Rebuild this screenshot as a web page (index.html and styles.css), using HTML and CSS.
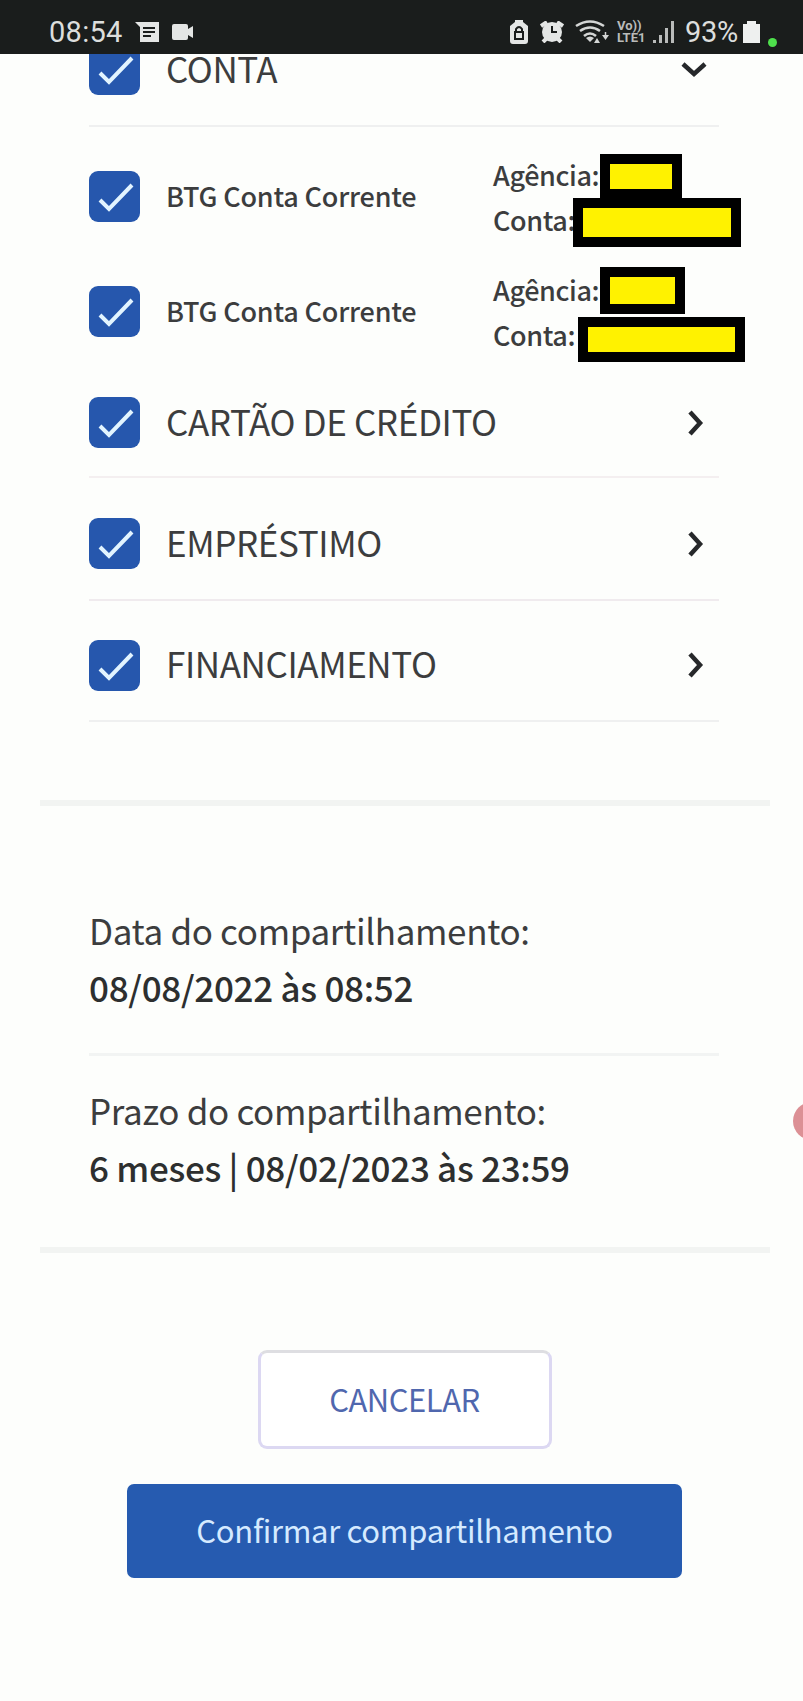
FILE: index.html
```
<!doctype html>
<html lang="pt-BR">
<head>
    <meta charset="UTF-8">
    <title>Compartilhamento</title>
    <link rel="stylesheet" href="styles.css">
</head>
<body>
<svg width="0" height="0" class="defs">
    <symbol id="check" viewBox="0 0 51 51"><path d="M11 29 L20 38 L43 14"/></symbol>
    <symbol id="arrow" viewBox="0 0 16 26"><path d="M2 2 L12 13 L2 24"/></symbol>
</svg>
<div class="status">
    <div class="status-left">
        <span class="clock">08:54</span>
        <svg class="msg" width="24" height="20" viewBox="0 0 24 20">
            <path fill="#e4e6e5" d="M0 0H24V20H5V5Z"/>
            <path stroke="#1a1d1c" stroke-width="2" d="M8 6H20M8 10H20M8 14H16"/>
        </svg>
        <svg class="cam" width="22" height="16" viewBox="0 0 22 16">
            <path fill="#e4e6e5" d="M2 0H14Q16 0 16 2V5L21 2V14L16 11V14Q16 16 14 16H2Q0 16 0 14V2Q0 0 2 0Z"/>
        </svg>
    </div>
    <div class="status-right">
        <svg width="18" height="24" viewBox="0 0 18 24">
            <path fill="#e4e6e5" d="M5 0H13V2L18 6V21Q18 24 15 24H3Q0 24 0 21V6L5 2Z"/>
            <path fill="none" stroke="#1a1d1c" stroke-width="2" d="M5 12H13V19H5ZM6 12V9Q9 5 12 9V12"/>
        </svg>
        <svg class="alarm" width="24" height="22" viewBox="0 0 24 22">
            <path stroke="#e4e6e5" stroke-width="4" d="M1 5L7 1M23 5L17 1M3 21L7 17M21 21L17 17"/>
            <circle cx="12" cy="11" r="10" fill="#e4e6e5"/>
            <path fill="none" stroke="#1a1d1c" stroke-width="2" d="M12 5V11H17"/>
        </svg>
        <svg class="wifi" width="34" height="25" viewBox="0 0 34 25">
            <path fill="none" stroke="#d4d6d5" stroke-width="2.6" d="M1 6Q15 -3 29 6M5 11Q15 4 25 11M9 16Q15 11 21 16"/>
            <path fill="#d4d6d5" d="M11 18Q15 15 19 18L15 22ZM19 23L22 18L25 23ZM27 15H34L30.500 20Z"/>
            <path stroke="#d4d6d5" stroke-width="1.500" d="M30.500 12V16"/>
        </svg>
        <span class="volte">Vo))<br>LTE1</span>
        <svg class="bars" width="21" height="22" viewBox="0 0 21 22">
            <path stroke="#b9bbba" stroke-width="3" d="M1.500 19V22M7.500 14V22M13.500 7V22M19.500 0V22"/>
        </svg>
        <span class="percent">93%</span>
        <svg class="battery" width="17" height="22" viewBox="0 0 17 22">
            <path fill="#eef0ef" d="M4 0H13V3H17V22H0V3H4Z"/>
        </svg>
        <span class="dot"></span>
    </div>
</div>

<div class="page">
    <div class="list">
        <div class="row conta">
            <svg class="box"><use href="#check"/></svg>
            <span class="label">CONTA</span>
            <svg class="arrow down"><use href="#arrow"/></svg>
        </div>
        <div class="account">
            <svg class="box"><use href="#check"/></svg>
            <span class="name">BTG Conta Corrente</span>
            <div class="data">
                <div>Agência:</div>
                <div>Conta:</div>
                <span class="mask mask-a1"></span>
                <span class="mask mask-c1"></span>
            </div>
        </div>
        <div class="account">
            <svg class="box"><use href="#check"/></svg>
            <span class="name">BTG Conta Corrente</span>
            <div class="data">
                <div>Agência:</div>
                <div>Conta:</div>
                <span class="mask mask-a2"></span>
                <span class="mask mask-c2"></span>
            </div>
        </div>
        <div class="row cartao">
            <svg class="box"><use href="#check"/></svg>
            <span class="label">CARTÃO DE CRÉDITO</span>
            <svg class="arrow"><use href="#arrow"/></svg>
        </div>
        <div class="row emprestimo">
            <svg class="box"><use href="#check"/></svg>
            <span class="label">EMPRÉSTIMO</span>
            <svg class="arrow"><use href="#arrow"/></svg>
        </div>
        <div class="row financiamento">
            <svg class="box"><use href="#check"/></svg>
            <span class="label">FINANCIAMENTO</span>
            <svg class="arrow"><use href="#arrow"/></svg>
        </div>
    </div>

    <div class="dates">
        <div class="info first">
            <div class="title">Data do compartilhamento:</div>
            <div class="value">08/08/2022 às 08:52</div>
        </div>
        <div class="info">
            <div class="title">Prazo do compartilhamento:</div>
            <div class="value term">6 meses | 08/02/2023 às 23:59</div>
        </div>
    </div>

    <div class="buttons">
        <button class="cancel">CANCELAR</button>
        <button class="confirm">Confirmar compartilhamento</button>
    </div>
    <span class="bubble"></span>
</div>
</body>
</html>
```
FILE: styles.css
```
*{
    box-sizing: border-box;
}
body{
    margin: 0;
    background: #fdfefc;
    color: #3c3d3e;
    font-family: "Noto Sans CJK SC", "Noto Sans", sans-serif;
}
.defs{
    position: absolute;
}
.status{
    position: relative;
    z-index: 2;
    display: flex;
    justify-content: space-between;
    height: 54px;
    padding: 10px 26px 0 49px;
    background: #1a1d1c;
    color: #dcdedd;
    font-family: Roboto, sans-serif;
}
.status-left, .status-right{
    display: flex;
    align-items: center;
}
.clock{
    font-size: 29px;
    line-height: 43px;
    letter-spacing: 0.3px;
}
.msg{
    margin-left: 12px;
}
.cam{
    margin-left: 13px;
}
.alarm{
    margin-left: 12px;
}
.wifi{
    margin-left: 11px;
}
.volte{
    width: 30px;
    margin-left: 8px;
    font-size: 13px;
    font-weight: bold;
    line-height: 12px;
    color: #b9bbba;
    white-space: nowrap;
}
.bars{
    margin-left: 6px;
}
.percent{
    width: 55px;
    margin-left: 11px;
    font-size: 29px;
    letter-spacing: -0.3px;
}
.battery{
    margin-left: 3px;
}
.dot{
    width: 9px;
    height: 9px;
    margin: 20px 0 0 8px;
    border-radius: 50%;
    background: #4ee04c;
}
.page{
    position: relative;
    height: 1688px;
    margin-top: -41px;
    overflow: hidden;
}
.list{
    padding: 0 84px 0 89px;
}
.row, .account{
    display: flex;
    align-items: center;
}
.row{
    border-bottom: 2px solid #eff0f0;
}
.conta{
    height: 114px;
    margin-bottom: 12px;
}
.account{
    height: 115px;
}
.cartao{
    height: 109px;
    border-color: #f4eff0;
}
.emprestimo{
    height: 123px;
    padding-top: 10px;
    border-color: #f0ebee;
}
.financiamento{
    height: 121px;
    padding-top: 9px;
}
.box{
    flex: none;
    width: 51px;
    height: 51px;
    border-radius: 9px;
    background: #2657ad;
    fill: none;
    stroke: #e2f4ff;
    stroke-width: 4;
}
.label{
    margin-left: 26px;
    padding-bottom: 4px;
    font-size: 35px;
    line-height: 50px;
    letter-spacing: -0.4px;
    white-space: nowrap;
}
.conta .label{
    padding-bottom: 2px;
}
.arrow{
    width: 16px;
    height: 26px;
    margin: 0 15px 0 auto;
    fill: none;
    stroke: #26282a;
    stroke-width: 4.500;
}
.down{
    margin: 2px 17px 0 auto;
    transform: rotate(90deg);
}
.name{
    width: 327px;
    margin-left: 26px;
    padding-bottom: 2px;
    font-size: 27px;
    font-weight: 500;
    letter-spacing: -0.2px;
    white-space: nowrap;
}
.data{
    position: relative;
    font-size: 27px;
    font-weight: 500;
    line-height: 45px;
    letter-spacing: -0.4px;
}
.mask{
    position: absolute;
    border: 10px solid #000;
    background: #fff200;
}
.mask-a1{
    left: 107px;
    top: 2px;
    width: 82px;
    height: 45px;
}
.mask-c1{
    left: 80px;
    top: 46px;
    width: 168px;
    height: 49px;
}
.mask-a2{
    left: 107px;
    top: 0;
    width: 85px;
    height: 47px;
}
.mask-c2{
    left: 85px;
    top: 50px;
    width: 167px;
    height: 45px;
}
.dates{
    margin: 78px 33px 0 40px;
    padding: 95px 51px 52px 49px;
    border-top: 6px solid #f2f4f2;
    border-bottom: 6px solid #f2f4f2;
}
.info{
    font-size: 35px;
    line-height: 57px;
    letter-spacing: -0.35px;
    white-space: nowrap;
}
.first{
    margin-bottom: 25px;
    padding-bottom: 38px;
    border-bottom: 3px solid #f2f4f3;
}
.value{
    font-weight: 500;
    color: #2d2f2f;
    letter-spacing: -0.3px;
}
.buttons{
    display: flex;
    flex-direction: column;
    align-items: center;
    gap: 35px;
    padding: 97px 0 0 6px;
}
.cancel, .confirm{
    font-family: inherit;
    font-size: 31px;
    padding: 0 0 3px;
    white-space: nowrap;
}
.cancel{
    width: 294px;
    height: 99px;
    border: 3px solid #dcd8f2;
    border-top-color: #dedee2;
    border-radius: 9px;
    background: #fff;
    color: #5067ae;
    letter-spacing: -0.5px;
}
.confirm{
    width: 555px;
    height: 94px;
    border: 0;
    border-radius: 7px;
    background: #265bb0;
    color: #d5eaff;
    letter-spacing: -0.3px;
}
.bubble{
    position: absolute;
    left: 793px;
    top: 1089px;
    width: 38px;
    height: 38px;
    border-radius: 50%;
    background: #dc9095;
}
```
